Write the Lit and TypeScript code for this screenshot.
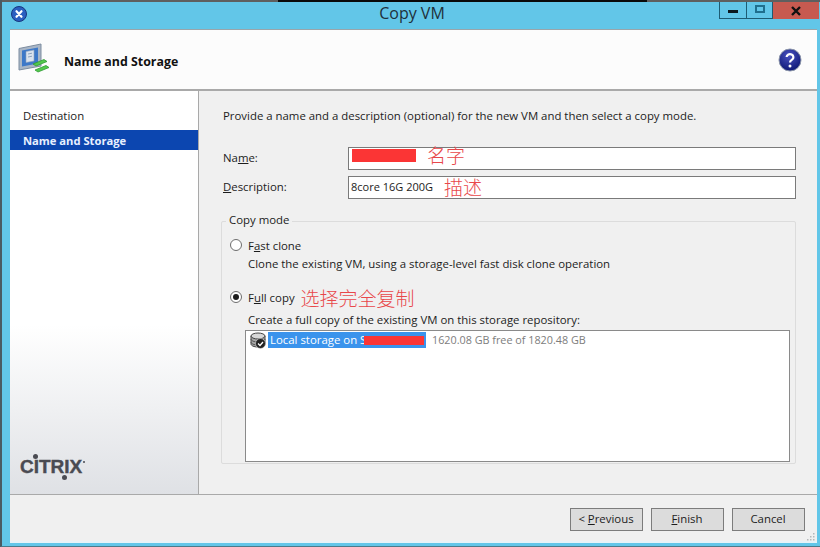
import {css, html, LitElement} from "lit";
import {customElement} from "lit/decorators.js";

@customElement("app-root")
export class AppRoot extends LitElement {
  static styles = css`
    :host {
      display: block;
      width: 820px;
      height: 547px;
      overflow: hidden;
      font-family: "Open Sans", "Noto Sans CJK SC", sans-serif;
      font-size: 11.4px;
      color: #1c1c1c;
    }

    .window {
      box-sizing: border-box;
      width: 820px;
      height: 547px;
      display: flex;
      flex-direction: column;
      background: #62c6e8;
      border-left: 2px solid #4a5a62;
      border-bottom: 1px solid #4a7a8a;
    }

    .top-strip {
      height: 2px;
      flex: none;
      background: linear-gradient(90deg, #5f5f5f 276px, #0a0a0a 276px, #0a0a0a 645px, #5f5f5f 645px);
    }

    .titlebar {
      height: 27px;
      flex: none;
      display: grid;
      grid-template-columns: 1fr auto 1fr;
      align-items: start;
    }

    .app-icon {
      margin: 4px 0 0 9px;
    }

    .title {
      font-size: 16px;
      line-height: 23px;
      color: #20303a;
      padding-left: 2px;
    }

    .win-buttons {
      display: flex;
      height: 17px;
      margin-right: 1px;
      justify-self: end;
    }

    .win-btn {
      box-sizing: border-box;
      display: flex;
      align-items: center;
      justify-content: center;
      height: 17px;
      border: 1px solid #1d5c74;
      border-top: none;
    }

    .win-btn.min {
      width: 28px;
    }

    .win-btn.max {
      width: 26px;
      border-left: none;
    }

    .win-btn.close {
      width: 46px;
      background: #c75a50;
      border: none;
    }

    .dash {
      width: 10px;
      height: 3px;
      background: #0c1a20;
      margin-top: 2px;
    }

    .restore {
      box-sizing: border-box;
      width: 10px;
      height: 8px;
      border: 2px solid #1f6f8e;
      margin-top: -3px;
    }

    .panel {
      flex: 1;
      margin: 0 3px 3px 8px;
      display: flex;
      flex-direction: column;
      background: #f0f0f0;
      min-height: 0;
      position: relative;
    }

    .header {
      height: 62px;
      flex: none;
      box-sizing: border-box;
      display: flex;
      align-items: center;
      background: #fcfcfc;
      border-bottom: 2px solid #a9a9a9;
      border-top: 1px solid #9aa5aa;
      padding: 0 15px 0 8px;
      gap: 11px;
    }

    .header h1 {
      flex: 1;
      margin: 4px 0 0;
      font-size: 12.4px;
      font-weight: 700;
      color: #111;
    }

    .body {
      flex: 1;
      display: flex;
      min-height: 0;
    }

    .side {
      width: 188px;
      flex: none;
      display: flex;
      flex-direction: column;
      background: linear-gradient(#fff 0, #fff 58%, #dfe1e5 100%);
      border-right: 1px solid #a9a9a9;
      padding-top: 15px;
    }

    .step {
      height: 20px;
      line-height: 20px;
      padding-left: 13px;
      margin-bottom: 4px;
    }

    .step.sel {
      background: #0c46b0;
      color: #e8f0ff;
      font-weight: 700;
      font-size: 11.2px;
      line-height: 21px;
    }

    .logo {
      margin: auto 0 15px 10px;
      position: relative;
      width: 66px;
      font-family: "Liberation Sans", sans-serif;
      font-weight: 700;
      font-size: 19px;
      line-height: 24px;
      color: #4a4b52;
      -webkit-text-stroke: 0.4px #4a4b52;
    }

    .logo i {
      position: absolute;
      width: 5px;
      height: 5px;
      border-radius: 50%;
      background: #4a4b52;
    }

    .logo i.top {
      left: 13px;
      top: -1px;
    }

    .logo i.bottom {
      left: 42px;
      top: 20px;
    }

    .logo i.reg {
      left: 63px;
      top: 6px;
      width: 2px;
      height: 2px;
    }

    .main {
      flex: 1;
      min-width: 0;
      display: flex;
      flex-direction: column;
      padding: 16px 21px 0 24px;
    }

    .intro {
      line-height: 18px;
    }

    .fields {
      display: grid;
      grid-template-columns: 125px 1fr;
      row-gap: 6px;
      margin-top: 22px;
      align-items: center;
    }

    .label {
      padding-bottom: 2px;
    }

    .box {
      box-sizing: border-box;
      height: 23px;
      display: flex;
      align-items: center;
      gap: 11px;
      padding: 0 0 2px 2px;
      background: #fff;
      border: 1px solid #7a7a7a;
      font-size: 11px;
    }

    .box.name {
      padding: 0 0 6px 3px;
    }

    .box.name .note {
      margin-bottom: 2px;
    }

    .redact {
      background: #fb3535;
    }

    .name-redact {
      width: 64px;
      height: 13px;
    }

    .note {
      color: #e8474a;
      font-size: 19px;
      line-height: 1;
      font-weight: 300;
      font-family: "Noto Sans CJK SC", sans-serif;
    }

    .group {
      box-sizing: border-box;
      position: relative;
      margin: 22px 0 0 -2px;
      height: 243px;
      border: 1px solid #dcdcdc;
      border-radius: 2px;
      padding: 13px 5px 1px 8px;
      display: flex;
      flex-direction: column;
    }

    .legend {
      position: absolute;
      top: -10px;
      left: 4px;
      padding: 0 3px;
      background: #f0f0f0;
      line-height: 16px;
    }

    .option {
      display: flex;
      align-items: center;
      height: 20px;
      gap: 6px;
    }

    .radio {
      box-sizing: border-box;
      width: 12px;
      height: 12px;
      flex: none;
      border: 1px solid #6d6d6d;
      border-radius: 50%;
      background: #fff;
      display: flex;
      align-items: center;
      justify-content: center;
    }

    .radio.on::after {
      content: "";
      width: 6px;
      height: 6px;
      border-radius: 50%;
      background: #1c1c1c;
    }

    .hint {
      margin-left: 18px;
      line-height: 18px;
    }

    .option.second {
      margin-top: 14px;
    }

    .hint.second {
      margin-top: 4px;
    }

    .list {
      box-sizing: border-box;
      flex: 1;
      margin: 1px 0 0 15px;
      background: #fff;
      border: 1px solid #8a8a8a;
      padding: 0 4px;
    }

    .row {
      display: flex;
      align-items: center;
      height: 18px;
    }

    .picked {
      display: flex;
      align-items: center;
      height: 16px;
      margin-left: 1px;
      width: 158px;
      background: #3a93ec;
      color: #fff;
      padding: 0 0 1px 2px;
      box-sizing: border-box;
      white-space: nowrap;
    }

    .picked .redact {
      width: 60px;
      height: 9px;
      margin: 1px 0 0 -2px;
    }

    .free {
      margin: 0 0 1px 6px;
      color: #7d7d7d;
      font-size: 10.8px;
    }

    .footer {
      height: 49px;
      flex: none;
      box-sizing: border-box;
      display: flex;
      justify-content: flex-end;
      gap: 8px;
      padding: 13px 12px 0 0;
      border-top: 1px solid #a9a9a9;
      border-bottom: 2px solid #e6f3f8;
    }

    .btn {
      box-sizing: border-box;
      width: 73px;
      height: 23px;
      display: flex;
      align-items: center;
      justify-content: center;
      padding: 0 1px 2px 0;
      background: #dcdcdc;
      border: 1px solid #7c7c7c;
    }

    .grip {
      position: absolute;
      right: 1px;
      bottom: 2px;
    }

    u {
      text-underline-offset: 1px;
    }
  `;

  render() {
    return html`
      <div class="window">
        <div class="top-strip"></div>
        <div class="titlebar">
          <svg class="app-icon" width="16" height="16" viewBox="0 0 16 16">
            <circle cx="8" cy="8" r="7.5" fill="#2a5fc0" stroke="#17357e"/>
            <path d="M5.500 5.200l5 5.600M10.500 5.200l-5 5.600" stroke="#fff" stroke-width="2.200" stroke-linecap="round"/>
          </svg>
          <div class="title">Copy VM</div>
          <div class="win-buttons">
            <div class="win-btn min"><span class="dash"></span></div>
            <div class="win-btn max"><span class="restore"></span></div>
            <div class="win-btn close">
              <svg width="12" height="10" viewBox="0 0 12 10">
                <path d="M2 1l8 8M10 1l-8 8" stroke="#111" stroke-width="2.400"/>
              </svg>
            </div>
          </div>
        </div>
        <div class="panel">
          <div class="header">
            <svg width="35" height="34" viewBox="0 0 35 34">
              <path d="M1 5.500l22-4.500v22l-22 4z" fill="#a9b6c6" stroke="#7d8da0"/>
              <path d="M4 7.500l16-3v16l-16 3z" fill="#3d78c8"/>
              <path d="M8 8.500l8-1.500v11l-8 1.500z" fill="#dbe3ee" stroke="#8ea3bd" stroke-width=".6"/>
              <path d="M10 11l4-.8M10 14l4-.8" stroke="#8ea3bd"/>
              <path d="M15 21l11-4.500 3 2-11 4.500zM17 27l11-4.500 3 2-11 4.500z" fill="#52c84c" stroke="#2f9a33" stroke-width=".8"/>
            </svg>
            <h1>Name and Storage</h1>
            <svg width="24" height="24" viewBox="0 0 24 24">
              <defs>
                <radialGradient id="help" cx=".45" cy=".3" r=".75">
                  <stop offset="0" stop-color="#4a52c0"/>
                  <stop offset="1" stop-color="#0a1470"/>
                </radialGradient>
              </defs>
              <circle cx="12" cy="12" r="11" fill="url(#help)" stroke="#8a94a8"/>
              <path d="M8.600 9a3.400 3 0 1 1 5.400 2.600c-1.300.9-2 1.400-2 3" fill="none" stroke="#fff" stroke-width="2.200"/>
              <circle cx="12" cy="18" r="1.500" fill="#fff"/>
            </svg>
          </div>
          <div class="body">
            <div class="side">
              <div class="step">Destination</div>
              <div class="step sel">Name and Storage</div>
              <div class="logo">CITRIX<i class="top"></i><i class="bottom"></i><i class="reg"></i></div>
            </div>
            <div class="main">
              <div class="intro">Provide a name and a description (optional) for the new VM and then select a copy mode.</div>
              <div class="fields">
                <div class="label">Na<u>m</u>e:</div>
                <div class="box name">
                  <span class="redact name-redact"></span>
                  <span class="note">名字</span>
                </div>
                <div class="label"><u>D</u>escription:</div>
                <div class="box">
                  <span>8core 16G 200G</span>
                  <span class="note">描述</span>
                </div>
              </div>
              <div class="group">
                <div class="legend">Copy mode</div>
                <div class="option"><span class="radio"></span><span>F<u>a</u>st clone</span></div>
                <div class="hint">Clone the existing VM, using a storage-level fast disk clone operation</div>
                <div class="option second">
                  <span class="radio on"></span><span>F<u>u</u>ll copy</span>
                  <span class="note">选择完全复制</span>
                </div>
                <div class="hint second">Create a full copy of the existing VM on this storage repository:</div>
                <div class="list">
                  <div class="row">
                    <svg width="17" height="17" viewBox="0 0 17 17">
                      <path d="M1 4v8c0 1.700 3 3 7 3s7-1.300 7-3V4" fill="#a8a8a8" stroke="#444"/>
                      <ellipse cx="8" cy="4" rx="7" ry="3" fill="#d8d8d8" stroke="#444"/>
                      <path d="M1 7c0 1.700 3 3 7 3s7-1.300 7-3M1 10c0 1.700 3 3 7 3s7-1.300 7-3" fill="none" stroke="#555"/>
                      <circle cx="10.500" cy="11.500" r="5" fill="#222" stroke="#ddd" stroke-width=".6"/>
                      <path d="M8 11.500l2 2 3-3.500" fill="none" stroke="#fff" stroke-width="1.300"/>
                    </svg>
                    <div class="picked">Local storage on S<span class="redact"></span></div>
                    <span class="free">1620.08 GB free of 1820.48 GB</span>
                  </div>
                </div>
              </div>
            </div>
          </div>
          <div class="footer">
            <div class="btn">&lt;&nbsp;<u>P</u>revious</div>
            <div class="btn"><u>F</u>inish</div>
            <div class="btn">Cancel</div>
          </div>
          <svg class="grip" width="9" height="8" viewBox="0 0 9 8" fill="#b4b8ba">
            <rect x="6" y="0" width="1.500" height="1.500"/>
            <rect x="3" y="3" width="1.500" height="1.500"/>
            <rect x="6" y="3" width="1.500" height="1.500"/>
            <rect x="0" y="6" width="1.500" height="1.500"/>
            <rect x="3" y="6" width="1.500" height="1.500"/>
            <rect x="6" y="6" width="1.500" height="1.500"/>
          </svg>
        </div>
      </div>
    `;
  }
}
